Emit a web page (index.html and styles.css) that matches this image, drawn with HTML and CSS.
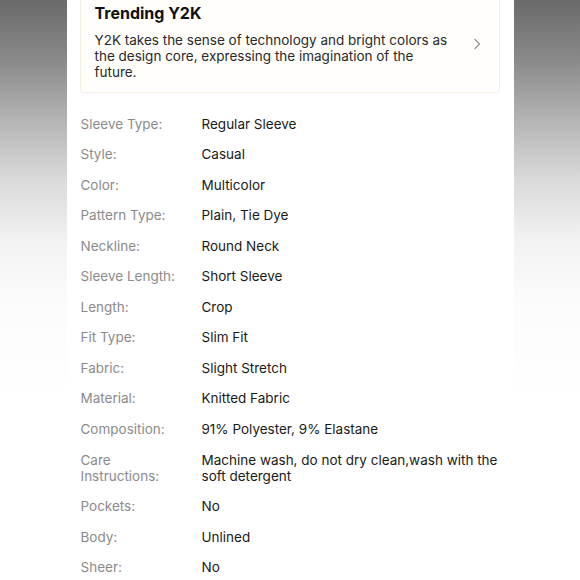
FILE: index.html
```html
<!DOCTYPE html>
<html>
<head>
<meta charset="utf-8">
<link rel="stylesheet" href="styles.css">
</head>
<body>
<div class="page">
  <div class="panel">
    <div class="card">
      <div class="card-text">
        <h2 class="card-title">Trending Y2K</h2>
        <p class="card-desc">Y2K takes the sense of technology and bright colors as the design core, expressing the imagination of the future.</p>
      </div>
      <svg class="chevron" width="10" height="12" viewBox="0 0 10 12"><path d="M3 1.5 L7.5 6 L3 10.5" fill="none" stroke="#9a9a9a" stroke-width="1.4" stroke-linecap="round" stroke-linejoin="round"/></svg>
    </div>
    <div class="specs">
      <div class="row"><div class="label">Sleeve Type:</div><div class="value">Regular Sleeve</div></div>
      <div class="row"><div class="label">Style:</div><div class="value">Casual</div></div>
      <div class="row"><div class="label">Color:</div><div class="value">Multicolor</div></div>
      <div class="row"><div class="label">Pattern Type:</div><div class="value">Plain, Tie Dye</div></div>
      <div class="row"><div class="label">Neckline:</div><div class="value">Round Neck</div></div>
      <div class="row"><div class="label">Sleeve Length:</div><div class="value">Short Sleeve</div></div>
      <div class="row"><div class="label">Length:</div><div class="value">Crop</div></div>
      <div class="row"><div class="label">Fit Type:</div><div class="value">Slim Fit</div></div>
      <div class="row"><div class="label">Fabric:</div><div class="value">Slight Stretch</div></div>
      <div class="row"><div class="label">Material:</div><div class="value">Knitted Fabric</div></div>
      <div class="row"><div class="label">Composition:</div><div class="value">91% Polyester, 9% Elastane</div></div>
      <div class="row"><div class="label">Care Instructions:</div><div class="value">Machine wash, do not dry clean,wash with the soft detergent</div></div>
      <div class="row"><div class="label">Pockets:</div><div class="value">No</div></div>
      <div class="row"><div class="label">Body:</div><div class="value">Unlined</div></div>
      <div class="row"><div class="label">Sheer:</div><div class="value">No</div></div>
    </div>
  </div>
</div>
</body>
</html>
```

FILE: styles.css
```css
* { box-sizing: border-box; }
html, body { margin: 0; padding: 0; }
body {
  width: 580px;
  height: 580px;
  overflow: hidden;
  font-family: "Inter", "Liberation Sans", sans-serif;
  background: linear-gradient(to bottom, #6b6a6a 0px, #8a8a8a 60px, #b4b4b4 120px, #dadada 180px, #f2f2f2 240px, #fbfbfb 300px, #ffffff 400px);
}
.page {
  display: flex;
  justify-content: center;
  height: 580px;
}
.panel {
  width: 447px;
  background: #ffffff;
  padding: 0 13px 0 14px;
}
.card {
  margin-top: -14px;
  margin-left: -1px;
  width: 420px;
  background: #fffefb;
  border: 1px solid #f4f1e4;
  border-radius: 3px;
  padding: 14px 17px 12px 14px;
  display: flex;
  align-items: center;
  justify-content: space-between;
}
.card-title {
  margin: 0 0 8px 0;
  font-size: 16px;
  font-weight: 700;
  line-height: 24px;
  color: #111;
}
.card-desc {
  margin: 0;
  width: 357px;
  font-size: 13.5px;
  line-height: 15.8px;
  color: #2a2a2a;
}
.chevron { flex: none; margin-top: 6px; }
.specs {
  padding-top: 15px;
}
.row {
  display: flex;
  padding: 7.28px 0;
  font-size: 13.5px;
  line-height: 16px;
}
.label {
  width: 121px;
  flex: none;
  color: #8b8b8b;
  padding-right: 10px;
}
.value {
  color: #1a1a1a;
  flex: 1;
}
```
